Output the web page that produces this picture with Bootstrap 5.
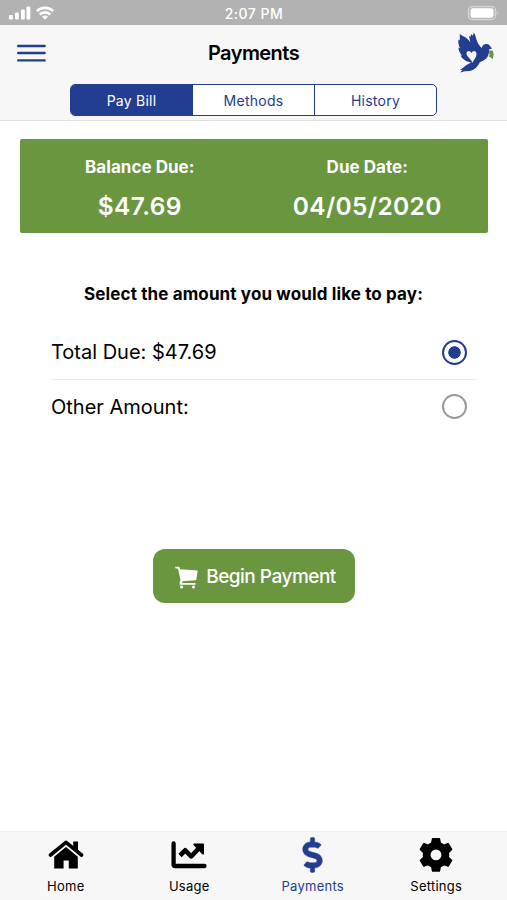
<!DOCTYPE html>
<html lang="en">
<head>
<meta charset="utf-8">
<meta name="viewport" content="width=device-width, initial-scale=1">
<title>Payments</title>
<link href="https://cdn.jsdelivr.net/npm/bootstrap@5.3.0/dist/css/bootstrap.min.css" rel="stylesheet">
<style>
  :root { --brand: #233d90; --leaf: #6a963f; --bar: #f7f7f7; }
  body { font-family: Inter, "Liberation Sans", sans-serif; color: #000; background: #fff; }
  svg { display: block; flex: none; }
  .status { height: 25px; background: #b2b2b2; color: #fff; padding: 1px 8px 0 9px; font-size: 14px; font-weight: 500; letter-spacing: .5px; }
  .status .side { width: 46px; }
  .top { height: 96px; background: var(--bar); border-bottom: 1px solid #e3e3e3; }
  .title-row { height: 55px; padding: 0 12px 0 17px; }
  .title-row h1 { font-size: 20px; font-weight: 600; letter-spacing: -.55px; margin: 0 5px 0 0; }
  .side { width: 38px; }
  .tabs { width: 367px; height: 32px; margin-top: 4px; border: 1.5px solid var(--brand); border-radius: 5px; overflow: hidden; }
  .tabs .nav-link { flex-basis: 0; padding: 0; color: var(--brand); font-size: 14px; letter-spacing: .25px; border-radius: 0; }
  .tabs .nav-link + .nav-link { border-left: 1px solid var(--brand); }
  .tabs .nav-link.active { background: var(--brand); color: #fff; }
  .summary { margin: 18px 19px 0 20px; height: 94px; background: var(--leaf); color: #fff; border-radius: 2px; padding: 17px 7px 0 6px; }
  .summary .cap { font-size: 17px; line-height: 22px; font-weight: 700; letter-spacing: .03px; }
  .summary .val { font-size: 24.5px; line-height: 30px; font-weight: 600; margin-top: 13px; letter-spacing: .35px; }
  .prompt { margin-top: 49px; font-size: 17px; line-height: 24px; font-weight: 700; letter-spacing: .13px; }
  .choices { margin: 19px 30px 0 51px; }
  .choice { height: 54px; padding-right: 10px; font-size: 20px; }
  .choice + .choice { border-top: 1px solid #ececec; }
  .pick { appearance: none; width: 25px; height: 25px; margin: 0; border: 2.5px solid #999; border-radius: 50%; background: #fff; }
  .pick:checked { border-color: var(--brand); background: radial-gradient(circle, var(--brand) 5.9px, #fff 6.5px); }
  .pay { width: 202px; height: 54px; margin-top: 116px; border-radius: 12px; background: var(--leaf); color: #fff; font-size: 19px; font-weight: 500; letter-spacing: -.5px; padding: 3px 0 0 4px; }
  .pay:hover { background: #5d8636; color: #fff; }
  .dock { height: 69px; background: var(--bar); border-top: 1px solid #ececec; padding: 0 9px 0 4px; }
  .dock a { color: #000; text-decoration: none; font-size: 13px; line-height: 18px; letter-spacing: .25px; padding-top: 5px; }
  .dock a.on { color: var(--brand); }
  .dock svg { height: 36px; margin-bottom: 4px; }
</style>
<script src="https://cdn.jsdelivr.net/npm/bootstrap@5.3.0/dist/js/bootstrap.bundle.min.js"></script>
</head>
<body class="d-flex flex-column vh-100 overflow-hidden">
  <div class="status d-flex align-items-center justify-content-between">
    <svg width="46" height="16" viewBox="0 0 46 16" fill="#fff">
      <rect x="0" y="10" width="3.8" height="4.5" rx="1"/><rect x="6" y="7.5" width="3.8" height="7" rx="1"/><rect x="12" y="4.5" width="3.8" height="10" rx="1"/><rect x="17.5" y="1.5" width="3.8" height="13" rx="1"/>
      <path d="M36 14.800l-3-3a4.400 4.400 0 0 1 6 0z"/>
      <path d="M30.700 9.500a7.600 7.600 0 0 1 10.600 0M27.800 6.100a11.800 11.800 0 0 1 16.400 0" fill="none" stroke="#fff" stroke-width="2.7"/>
    </svg>
    <span>2:07 PM</span>
    <div class="side d-flex justify-content-end"><svg width="32" height="16" viewBox="0 0 32 16">
      <rect x="1.500" y="1.500" width="27" height="13" rx="4" fill="none" stroke="#d4d4d4" stroke-width="1.4"/>
      <rect x="3.500" y="3.200" width="23" height="9.600" rx="2.400" fill="#fff"/><path d="M30 6v4q2-2 0-4" fill="#d4d4d4"/>
    </svg></div>
  </div>

  <header class="top">
    <div class="title-row d-flex align-items-center justify-content-between">
      <div class="side">
        <svg width="29" height="20" viewBox="0 0 29 20" stroke="#233d90" stroke-width="2.4" stroke-linecap="round"><path d="M1.200 3h26.400M1.200 10h26.400M1.200 17.400h26.400"/></svg>
      </div>
      <h1>Payments</h1>
      <svg class="side" height="42" viewBox="0 0 38 42">
        <path fill="#233d90" d="M2.800 2C6 4.500 10.500 5.500 13.500 10.500L11.800 3.800 13.500 5 14 2 15.800 3.800 16.800 .8C19 3 18.500 8 22.500 13.500L24.500 16C25.500 13 28 11.500 31 12.300C32.500 12.800 33 14.500 35 16.500L32 17.500C32.500 24 29 28.500 23 30C21 34 18 38 12.500 39L8 39.300 3 40.500 5.500 38 2.800 37.800C7 35.500 10 32 14.200 30.500C8.500 29.500 5 26.500 3.500 23.500L5 23.500C2.500 21 1.500 18 1.500 15.500L3 16.200C1.500 13 1 10 1.400 7.500L2.800 8.500Z"/>
        <path fill="#f7f7f7" d="M15.500 31C14.500 27 9 24.500 9.500 21.300C10 18.300 13.300 18.300 14.500 21.200C15.700 17.800 19.600 18.600 19.500 22.200C19.400 26 16.500 27.500 15.500 31Z"/>
        <path fill="#6b914d" d="M31.500 18.500L35.500 18.500 36.700 22 35.800 27 31.500 24 33.500 22.500 30.800 22 32.500 20.200Z"/>
      </svg>
    </div>
    <nav class="tabs nav nav-fill mx-auto align-items-stretch bg-white">
      <a class="nav-link active d-flex align-items-center justify-content-center" href="#">Pay Bill</a>
      <a class="nav-link d-flex align-items-center justify-content-center" href="#">Methods</a>
      <a class="nav-link d-flex align-items-center justify-content-center" href="#">History</a>
    </nav>
  </header>

  <main class="flex-grow-1 d-flex flex-column">
    <section class="summary">
      <div class="row g-0 text-center">
        <div class="col-6"><div class="cap">Balance Due:</div><div class="val">$47.69</div></div>
        <div class="col-6"><div class="cap">Due Date:</div><div class="val">04/05/2020</div></div>
      </div>
    </section>
    <p class="prompt text-center mb-0">Select the amount you would like to pay:</p>
    <div class="choices">
      <label class="choice d-flex align-items-center justify-content-between"><span>Total Due: $47.69</span><input class="pick" type="radio" name="amount" checked></label>
      <label class="choice d-flex align-items-center justify-content-between"><span>Other Amount:</span><input class="pick" type="radio" name="amount"></label>
    </div>
    <button class="pay btn border-0 mx-auto d-flex align-items-center justify-content-center gap-2" type="button">
      <svg width="23" height="23" viewBox="0 0 23 23" fill="#fff"><path d="M0 .8h3.700q.8 0 1.100 1.100l.4 1.300 17.500 1.300-1.300 8.700q-.2 1-1.200 1L7.500 15.200 7 17h13.500v1.700H5.200q-1.100-.2-.7-1.400l1-3L3 2.600H.6z"/><circle cx="6.600" cy="21" r="1.600"/><circle cx="18.500" cy="21" r="1.600"/></svg>
      <span>Begin Payment</span>
    </button>
  </main>

  <nav class="dock row g-0 text-center">
    <a class="col-3 d-flex flex-column align-items-center" href="#">
      <svg width="36" viewBox="0 0 36 36"><path d="M2.500 18L18 5.300 33.500 18" fill="none" stroke="#000" stroke-width="3.600" stroke-linecap="round" stroke-linejoin="round"/><path d="M25.200 4.500H30v10l-4.800-3.800zM18 10L29.800 19.800v11.700H20.800v-8h-5.200v8H6.200V19.800z"/></svg>
      <span>Home</span></a>
    <a class="col-3 d-flex flex-column align-items-center" href="#">
      <svg width="36" viewBox="0 0 36 36"><path d="M2.600 6.500v21.200q0 1.300 1.300 1.300H33.500" fill="none" stroke="#000" stroke-width="4.300" stroke-linecap="round" stroke-linejoin="round"/><path d="M9 18.500L14.200 13.300l6 6 8-8.500" fill="none" stroke="#000" stroke-width="4.600" stroke-linejoin="round"/><path d="M23 6.500H32q1 0 1 1V17q-1 1-2 0l-8.500-9q-.7-1 .5-1.500z"/></svg>
      <span>Usage</span></a>
    <a class="on col-3 d-flex flex-column align-items-center" href="#">
      <svg width="21" viewBox="0 -8 288 528" fill="currentColor"><path stroke="currentColor" stroke-width="6" d="M209.200 233.400l-108-31.600C88.700 198.200 80 186.500 80 173.500c0-16.300 13.200-29.500 29.500-29.500h66.300c12.200 0 24.200 3.700 34.200 10.500 6.100 4.100 14.300 3.100 19.500-2l34.800-34c7.100-6.900 6.100-18.400-1.800-24.500C238 74.800 207.400 64.100 176 64V16c0-8.800-7.200-16-16-16h-32c-8.800 0-16 7.200-16 16v48h-2.500C45.800 64-5.400 118.700.5 183.600c4.200 46.100 39.400 83.600 83.800 96.600l102.500 30c12.500 3.700 21.200 15.300 21.200 28.300 0 16.300-13.200 29.500-29.500 29.500h-66.300C100 368 88 364.300 78 357.500c-6.100-4.100-14.300-3.100-19.500 2l-34.800 34c-7.100 6.900-6.100 18.400 1.800 24.500 24.500 19.200 55.100 29.900 86.500 30v48c0 8.800 7.200 16 16 16h32c8.800 0 16-7.200 16-16v-48.200c46.600-.9 90.300-28.600 105.700-72.700 21.500-61.600-14.600-124.800-72.500-141.700z"/></svg>
      <span>Payments</span></a>
    <a class="col-3 d-flex flex-column align-items-center" href="#">
      <svg width="36" viewBox="0.500 0.500 35 35"><path fill-rule="evenodd" stroke="#000" stroke-width="1.600" stroke-linejoin="round" d="M14.800 2.200h6.400l.9 4.300q2 .7 3.600 2.100l4.100-1.500 3.300 5.500-3.200 3q.4 2.300 0 4.600l3.200 3-3.300 5.500-4.100-1.500q-1.600 1.400-3.600 2.100l-.9 4.300h-6.400l-.9-4.300q-2-.7-3.600-2.100l-4.100 1.500-3.300-5.500 3.200-3q-.4-2.300 0-4.600l-3.200-3 3.300-5.500 4.100 1.500q1.600-1.400 3.600-2.100zM18 11.800a6.100 6.100 0 1 0 0 12.200 6.100 6.100 0 1 0 0-12.200z"/></svg>
      <span>Settings</span></a>
  </nav>
</body>
</html>
